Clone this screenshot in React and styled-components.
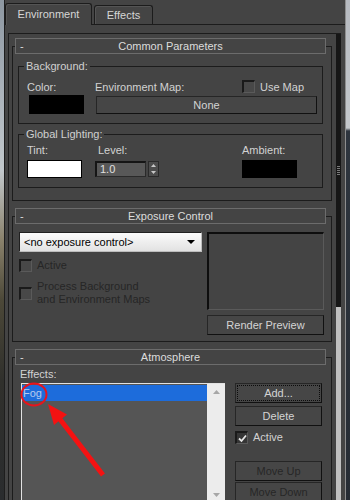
import styled, { createGlobalStyle } from 'styled-components';

const GlobalStyle = createGlobalStyle`
  html, body {
    margin: 0;
    padding: 0;
    background: #2c333c;
  }
  body {
    font-family: "Liberation Sans", Arial, sans-serif;
    font-size: 11px;
  }
  * { box-sizing: border-box; }
`;

// whole 350x500 shot: bits of desktop on both sides of the dialog
const Screen = styled.div`
  width: 350px;
  height: 500px;
  display: flex;
  overflow: hidden;
`;

const DesktopLeft = styled.div`
  width: 4px;
  flex: none;
  background: linear-gradient(#8d97a1 0, #aab2ba 90px, #c2c8cc 170px, #8a826c 240px, #4c4838 300px, #30302c 380px, #2a2c2e 500px);
`;

const DesktopRight = styled.div`
  width: 4px;
  flex: none;
  background: linear-gradient(#b6bac0 0, #c4c8cc 128px, #2e353e 131px, #262c34 500px);
`;

const Window = styled.div`
  flex: 1;
  min-width: 0;
  display: flex;
  flex-direction: column;
  background: #444;
  border-left: 1px solid #1e1e1e;
  border-right: 1px solid #8e8e8e;
  color: #d2d2d2;
`;

// tabs
const TabBar = styled.div`
  height: 25px;
  flex: none;
  display: flex;
  align-items: flex-end;
  border-bottom: 1px solid #1c1c1c;
`;

const Tab = styled.div`
  width: ${p => p.$width}px;
  height: ${p => (p.$active ? 22 : 19)}px;
  margin-left: ${p => (p.$active ? 0 : 2)}px;
  margin-bottom: ${p => (p.$active ? -1 : 0)}px;
  display: flex;
  align-items: center;
  justify-content: center;
  padding-bottom: ${p => (p.$active ? 1 : 0)}px;
  background: #444;
  border: 1px solid #1c1c1c;
  border-bottom: none;
  border-radius: 3px 3px 0 0;
  box-shadow: inset 1px 1px 0 #545454;
  color: #d6d6d6;
`;

const TabPage = styled.div`
  flex: 1;
  min-height: 0;
  display: flex;
  padding: 8px 4px 0 3px;
`;

const Panel = styled.div`
  flex: 1;
  display: flex;
  border-left: 1px solid #1c1c1c;
  border-top: 1px solid #1c1c1c;
  overflow: hidden;
`;

const RolloutColumn = styled.div`
  flex: 1;
  min-width: 0;
  display: flex;
  flex-direction: column;
  padding: 12px 4px 0 3px;
`;

// the rollout scroller on the right edge
const RollScroll = styled.div`
  width: 5px;
  flex: none;
  display: flex;
  flex-direction: column;
`;

const RollThumb = styled.div`
  height: 273px;
  flex: none;
  background: #161616;
  display: flex;
  align-items: center;
  justify-content: center;
`;

const Grip = styled.div`
  width: 3px;
  height: 10px;
  background: repeating-linear-gradient(#7a7a7a 0 1px, transparent 1px 2px);
`;

const RollRest = styled.div`
  flex: 1;
  background: #c0c0c0;
`;

// rollouts
const Rollout = styled.section`
  flex: none;
  border: 1px solid #1c1c1c;
  & + & { margin-top: 15px; }
`;

const RolloutHeader = styled.div`
  margin: -9px 5px 0 2px;
  height: 16px;
  display: grid;
  grid-template-columns: 1fr auto 1fr;
  align-items: center;
  line-height: 14px;
  background: #444;
  border: 1px solid #6c6c6c;
  color: #dcdcdc;
`;

const Dash = styled.span`
  padding-left: 4px;
`;

const CommonBody = styled.div`
  display: flex;
  flex-direction: column;
  gap: 4px;
  padding: 6px 8px 12px 5px;
`;

const Group = styled.fieldset`
  margin: 0;
  padding: 0;
  min-width: 0;
  border: 1px solid #1c1c1c;
`;

const GroupLegend = styled.legend`
  margin-left: 5px;
  padding: 0 2px;
  line-height: 12px;
  color: #d0d0d0;
`;

const GroupGrid = styled.div`
  display: grid;
  grid-template-columns: 68px 147px 1fr;
  grid-template-rows: 13px auto;
  row-gap: ${p => p.$gap}px;
  padding: ${p => p.$top}px 5px 9px 8px;
`;

const Label = styled.span`
  line-height: 13px;
  white-space: nowrap;
  padding-left: ${p => p.$indent || 0}px;
  color: ${p => (p.$disabled ? '#262626' : '#d2d2d2')};
`;

const Swatch = styled.div`
  width: 55px;
  height: ${p => p.$h || 18}px;
  margin-left: ${p => p.$indent || 0}px;
  background: ${p => p.$color};
  border: 1px solid #000;
`;

const FlatButton = styled.button`
  display: flex;
  align-items: center;
  justify-content: center;
  height: ${p => p.$h || 20}px;
  width: ${p => (p.$w ? `${p.$w}px` : 'auto')};
  margin: 0;
  padding: 0;
  font: inherit;
  background: #464646;
  border: 1px solid;
  border-color: #262626 #111 #111 #262626;
  color: ${p => (p.$disabled ? '#262626' : '#d4d4d4')};
  outline: ${p => (p.$focus ? '1px dotted #0c0c0c' : 'none')};
  outline-offset: -3px;
`;

const MapButton = styled(FlatButton)`
  grid-column: 2 / 4;
  margin: 1px 0 0 1px;
`;

const CheckRow = styled.label`
  display: flex;
  align-items: center;
  gap: 5px;
  margin-top: ${p => p.$top || 0}px;
`;

const Box = styled.span`
  width: 13px;
  height: 13px;
  flex: none;
  margin-top: ${p => p.$lift ? -3 : 0}px;
  display: flex;
  align-items: center;
  justify-content: center;
  background: ${p => (p.$checked ? '#353535' : '#484848')};
  border: 1px solid;
  border-width: 2px 1px 1px 2px;
  border-color: #1a1a1a #5a5a5a #5a5a5a #1a1a1a;
`;

const Spinner = styled.div`
  display: flex;
  gap: 2px;
  margin-top: 1px;
`;

const SpinField = styled.div`
  width: 51px;
  height: 16px;
  padding-left: 3px;
  line-height: 13px;
  background: #585858;
  border: 1px solid;
  border-width: 2px 1px 1px 2px;
  border-color: #151515 #2a2a2a #2a2a2a #151515;
  color: #e0e0e0;
`;

const SpinArrows = styled.div`
  width: 11px;
  height: 16px;
  display: flex;
  flex-direction: column;
  align-items: center;
  justify-content: space-around;
  background: #4c4c4c;
  border: 1px solid #2a2a2a;
`;

const ExposureBody = styled.div`
  display: flex;
  gap: 5px;
  padding: 8px 7px 6px 6px;
`;

const ExposureLeft = styled.div`
  width: 183px;
  flex: none;
  display: flex;
  flex-direction: column;
`;

const ExposureRight = styled.div`
  flex: 1;
  display: flex;
  flex-direction: column;
  gap: 5px;
`;

const Dropdown = styled.div`
  height: 20px;
  display: flex;
  align-items: center;
  justify-content: space-between;
  padding: 0 4px 0 4px;
  background: linear-gradient(#fbfbfb, #e2e2e2);
  border: 1px solid;
  border-color: #202020 #bdbdbd #bdbdbd #202020;
  color: #000;
`;

const DropArrow = styled.span`
  width: 0;
  height: 0;
  margin-right: 2px;
  border-left: 4px solid transparent;
  border-right: 4px solid transparent;
  border-top: 4px solid #000;
`;

const Preview = styled.div`
  height: 78px;
  background: #444;
  border: 1px solid;
  border-width: 2px 1px 1px 2px;
  border-color: #0e0e0e #5a5a5a #5a5a5a #0e0e0e;
`;

const AtmosphereBody = styled.div`
  padding: 3px 8px 0 7px;
`;

const EffectsRow = styled.div`
  display: flex;
  gap: 10px;
  margin-top: 2px;
`;

const ListWrap = styled.div`
  position: relative;
  width: 204px;
  height: 120px;
  margin-left: 1px;
  flex: none;
`;

const ListBox = styled.div`
  height: 100%;
  display: flex;
  background: #555;
  border-left: 1px solid #e2e2e2;
  border-top: 1px solid #e2e2e2;
`;

const ListItems = styled.div`
  flex: 1;
  padding-top: 1px;
`;

const ListItem = styled.div`
  height: 16px;
  line-height: 16px;
  padding-left: 1px;
  background: ${p => (p.$selected ? '#1d6cdb' : 'transparent')};
  color: #b6cbee;
`;

const ListScroll = styled.div`
  width: 18px;
  height: 118px;
  flex: none;
  display: flex;
  flex-direction: column;
  justify-content: space-between;
  align-items: center;
  padding: 6px 0 5px;
  background: #ececec;
`;

const Annotation = styled.svg`
  position: absolute;
  left: 0;
  top: 0;
  overflow: visible;
  pointer-events: none;
`;

const ButtonColumn = styled.div`
  width: 87px;
  flex: none;
  display: flex;
  flex-direction: column;
`;

const StackButton = styled(FlatButton)`
  margin-top: ${p => p.$top || 0}px;
`;

function Tri({ up, color, w = 7, h = 4 }) {
  return (
    <svg width={w} height={h} viewBox={`0 0 ${w} ${h}`}>
      <polygon
        points={up ? `0,${h} ${w},${h} ${w / 2},0` : `0,0 ${w},0 ${w / 2},${h}`}
        fill={color}
      />
    </svg>
  );
}

function Check({ checked, lift }) {
  return (
    <Box $checked={checked} $lift={lift}>
      {checked && (
        <svg width="9" height="9" viewBox="0 0 9 9">
          <path d="M1 4.5 L3.5 7 L8 1.5" fill="none" stroke="#e6e6e6" strokeWidth="1.8" />
        </svg>
      )}
    </Box>
  );
}

function Header({ title }) {
  return (
    <RolloutHeader>
      <Dash>-</Dash>
      <span>{title}</span>
      <span />
    </RolloutHeader>
  );
}

export default function App() {
  return (
    <>
      <GlobalStyle />
      <Screen>
        <DesktopLeft />
        <Window>
          <TabBar>
            <Tab $active $width={87}>Environment</Tab>
            <Tab $width={59}>Effects</Tab>
          </TabBar>

          <TabPage>
            <Panel>
              <RolloutColumn>
                {/* Common Parameters */}
                <Rollout>
                  <Header title="Common Parameters" />
                  <CommonBody>
                    <Group>
                      <GroupLegend>Background:</GroupLegend>
                      <GroupGrid $top={9} $gap={1}>
                        <Label>Color:</Label>
                        <Label>Environment Map:</Label>
                        <CheckRow>
                          <Check lift />
                          <Label>Use Map</Label>
                        </CheckRow>
                        <Swatch $color="#000" $h={19} $indent={2} />
                        <MapButton $h={18}>None</MapButton>
                      </GroupGrid>
                    </Group>
                    <Group>
                      <GroupLegend>Global Lighting:</GroupLegend>
                      <GroupGrid $top={4} $gap={3}>
                        <Label>Tint:</Label>
                        <Label $indent={3}>Level:</Label>
                        <Label>Ambient:</Label>
                        <Swatch $color="#fff" />
                        <Spinner>
                          <SpinField>1.0</SpinField>
                          <SpinArrows>
                            <Tri up color="#c8c8c8" w={5} h={3} />
                            <Tri color="#c8c8c8" w={5} h={3} />
                          </SpinArrows>
                        </Spinner>
                        <Swatch $color="#000" />
                      </GroupGrid>
                    </Group>
                  </CommonBody>
                </Rollout>

                {/* Exposure Control */}
                <Rollout>
                  <Header title="Exposure Control" />
                  <ExposureBody>
                    <ExposureLeft>
                      <Dropdown>
                        <span>&lt;no exposure control&gt;</span>
                        <DropArrow />
                      </Dropdown>
                      <CheckRow $top={7}>
                        <Check />
                        <Label $disabled>Active</Label>
                      </CheckRow>
                      <CheckRow $top={8}>
                        <Check />
                        <Label $disabled>
                          Process Background
                          <br />
                          and Environment Maps
                        </Label>
                      </CheckRow>
                    </ExposureLeft>
                    <ExposureRight>
                      <Preview />
                      <FlatButton>Render Preview</FlatButton>
                    </ExposureRight>
                  </ExposureBody>
                </Rollout>

                {/* Atmosphere */}
                <Rollout>
                  <Header title="Atmosphere" />
                  <AtmosphereBody>
                    <Label>Effects:</Label>
                    <EffectsRow>
                      <ListWrap>
                        <ListBox>
                          <ListItems>
                            <ListItem $selected>Fog</ListItem>
                          </ListItems>
                          <ListScroll>
                            <Tri up color="#a6a6a6" />
                            <Tri color="#a6a6a6" />
                          </ListScroll>
                        </ListBox>
                        <Annotation width="100" height="110" viewBox="0 0 100 110">
                          <ellipse cx="13" cy="11.5" rx="12.5" ry="11" fill="none" stroke="#e8141c" strokeWidth="2" />
                          <line x1="38" y1="35" x2="82" y2="92" stroke="#f41212" strokeWidth="5" />
                          <polygon points="27,21 46,31.5 33,42" fill="#f41212" />
                        </Annotation>
                      </ListWrap>
                      <ButtonColumn>
                        <StackButton $focus>Add...</StackButton>
                        <StackButton $top={3}>Delete</StackButton>
                        <CheckRow $top={5}>
                          <Check checked />
                          <Label>Active</Label>
                        </CheckRow>
                        <StackButton $top={17} $disabled>Move Up</StackButton>
                        <StackButton $top={1} $disabled>Move Down</StackButton>
                      </ButtonColumn>
                    </EffectsRow>
                  </AtmosphereBody>
                </Rollout>
              </RolloutColumn>

              <RollScroll>
                <RollThumb>
                  <Grip />
                </RollThumb>
                <RollRest />
              </RollScroll>
            </Panel>
          </TabPage>
        </Window>
        <DesktopRight />
      </Screen>
    </>
  );
}
